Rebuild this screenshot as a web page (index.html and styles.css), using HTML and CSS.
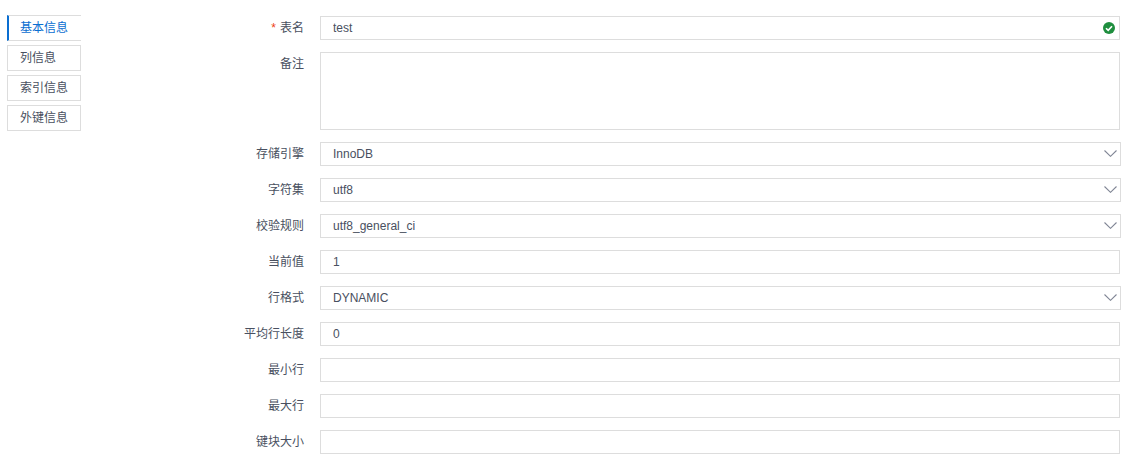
FILE: index.html
```html
<!DOCTYPE html>
<html lang="en">
<head>
    <meta charset="UTF-8">
    <title>表信息</title>
    <link rel="stylesheet" href="styles.css">
</head>
<body>
    <div class="page">
        <ul class="tabs">
            <li class="tab active">基本信息</li>
            <li class="tab">列信息</li>
            <li class="tab">索引信息</li>
            <li class="tab">外键信息</li>
        </ul>

        <form class="form">
            <div class="row">
                <label class="label"><span class="required">*</span>表名</label>
                <div class="control">
                    <input class="input has-icon" type="text" value="test">
                    <svg class="icon-ok" width="12" height="12" viewBox="0 0 12 12">
                        <circle cx="6" cy="6" r="6" fill="#1e8e3e"/>
                        <path d="M3 6.2 5.2 8.4 9 4.2" fill="none" stroke="#fff" stroke-width="1.6"/>
                    </svg>
                </div>
            </div>
            <div class="row">
                <label class="label">备注</label>
                <div class="control">
                    <textarea class="input textarea"></textarea>
                </div>
            </div>
            <div class="row">
                <label class="label">存储引擎</label>
                <div class="control select">
                    <span class="input value">InnoDB</span>
                    <svg class="arrow" width="13" height="7" viewBox="0 0 13 7">
                        <path d="M.5.5 6.5 6.3 12.5.5" fill="none" stroke="#808695" stroke-width="1.1"/>
                    </svg>
                </div>
            </div>
            <div class="row">
                <label class="label">字符集</label>
                <div class="control select">
                    <span class="input value">utf8</span>
                    <svg class="arrow" width="13" height="7" viewBox="0 0 13 7">
                        <path d="M.5.5 6.5 6.3 12.5.5" fill="none" stroke="#808695" stroke-width="1.1"/>
                    </svg>
                </div>
            </div>
            <div class="row">
                <label class="label">校验规则</label>
                <div class="control select">
                    <span class="input value">utf8_general_ci</span>
                    <svg class="arrow" width="13" height="7" viewBox="0 0 13 7">
                        <path d="M.5.5 6.5 6.3 12.5.5" fill="none" stroke="#808695" stroke-width="1.1"/>
                    </svg>
                </div>
            </div>
            <div class="row">
                <label class="label">当前值</label>
                <div class="control">
                    <input class="input" type="text" value="1">
                </div>
            </div>
            <div class="row">
                <label class="label">行格式</label>
                <div class="control select">
                    <span class="input value">DYNAMIC</span>
                    <svg class="arrow" width="13" height="7" viewBox="0 0 13 7">
                        <path d="M.5.5 6.5 6.3 12.5.5" fill="none" stroke="#808695" stroke-width="1.1"/>
                    </svg>
                </div>
            </div>
            <div class="row">
                <label class="label">平均行长度</label>
                <div class="control">
                    <input class="input" type="text" value="0">
                </div>
            </div>
            <div class="row">
                <label class="label">最小行</label>
                <div class="control">
                    <input class="input" type="text">
                </div>
            </div>
            <div class="row">
                <label class="label">最大行</label>
                <div class="control">
                    <input class="input" type="text">
                </div>
            </div>
            <div class="row">
                <label class="label">键块大小</label>
                <div class="control">
                    <input class="input" type="text">
                </div>
            </div>
        </form>
    </div>
</body>
</html>
```

FILE: styles.css
```css
* {
    box-sizing: border-box;
}
body {
    margin: 0;
    background-color: #fff;
    color: #495060;
    font-family: "Liberation Sans", "Noto Sans CJK SC", sans-serif;
    font-size: 12px;
}
.page {
    display: flex;
    padding: 15px 21px 0 7px;
}
.tabs {
    list-style: none;
    width: 74px;
    margin: 0;
    padding: 0;
    flex-shrink: 0;
}
.tab {
    height: 26px;
    line-height: 24px;
    margin-bottom: 4px;
    padding-left: 12px;
    border: 1px solid #ddd;
    color: #495060;
}
.tab.active {
    padding-left: 11px;
    border-left: 2px solid #0a6ed1;
    border-right: none;
    color: #0a6ed1;
}
.form {
    flex: 1;
    padding-top: 1px;
}
.row {
    display: flex;
    margin-bottom: 12px;
}
.label {
    width: 239px;
    padding-right: 16px;
    line-height: 24px;
    text-align: right;
    color: #495060;
}
.required {
    margin-right: 4px;
    color: #ed4014;
    font-family: "Liberation Sans", sans-serif;
}
.control {
    position: relative;
    width: 800px;
}
.control.select {
    width: 801px;
}
.input {
    display: block;
    width: 100%;
    height: 24px;
    padding: 0 12px;
    border: 1px solid #ddd;
    border-radius: 0;
    outline: none;
    background-color: #fff;
    color: #495060;
    font-family: inherit;
    font-size: 12px;
    line-height: 22px;
}
.textarea {
    height: 78px;
    padding: 4px 12px;
    resize: none;
}
.has-icon {
    padding-right: 28px;
}
.icon-ok {
    position: absolute;
    top: 6px;
    right: 5px;
}
.arrow {
    position: absolute;
    top: 8px;
    right: 4px;
}
```
